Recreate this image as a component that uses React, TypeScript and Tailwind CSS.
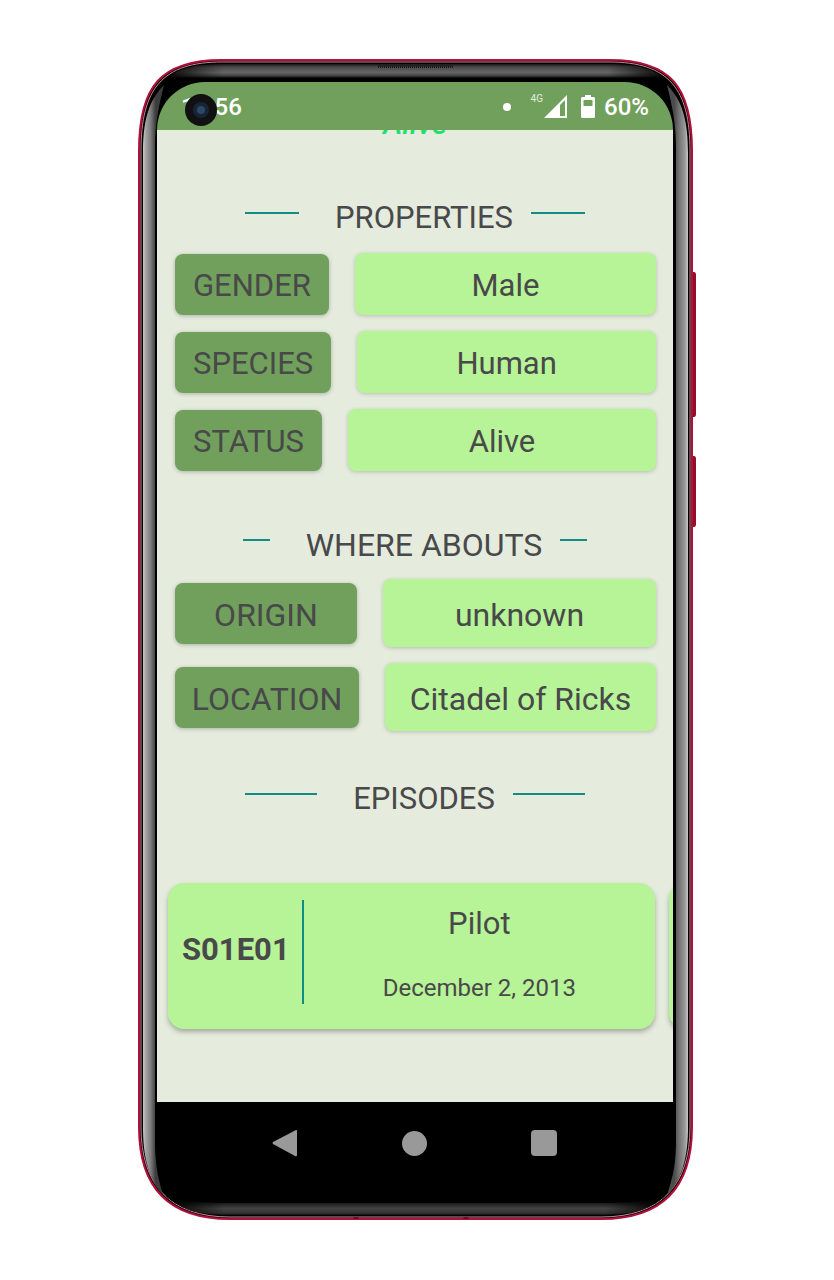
import type { ReactNode } from "react";

function PhoneFrame() {
  return (
    <svg className="absolute inset-0 h-full w-full" viewBox="0 0 558 1161" preserveAspectRatio="none" aria-hidden="true">
      <defs>
        <linearGradient id="left" x1="0" x2="1">
          <stop offset="0" stopColor="#c8c8c8" />
          <stop offset="0.15" stopColor="#a0a0a0" />
          <stop offset="0.35" stopColor="#808080" />
          <stop offset="0.6" stopColor="#3c3c3c" />
        </linearGradient>
        <linearGradient id="right" x1="0" x2="1">
          <stop offset="0.35" stopColor="#4c4c4c" />
          <stop offset="0.6" stopColor="#777" />
          <stop offset="0.85" stopColor="#999" />
          <stop offset="1" stopColor="#c8c8c8" />
        </linearGradient>
        <linearGradient id="top" x1="0" x2="0" y1="0" y2="1">
          <stop offset="0" stopColor="#1c1416" />
          <stop offset="0.15" stopColor="#4a4a4a" />
          <stop offset="0.4" stopColor="#666" />
          <stop offset="0.55" stopColor="#444" />
          <stop offset="0.68" stopColor="#000" />
        </linearGradient>
        <linearGradient id="bottom" x1="0" x2="0" y1="0" y2="1">
          <stop offset="0.2" stopColor="#000" />
          <stop offset="0.65" stopColor="#444" />
          <stop offset="0.9" stopColor="#333" />
          <stop offset="1" stopColor="#111" />
        </linearGradient>
        <linearGradient id="fade" x1="0" x2="1">
          <stop offset="0" stopColor="#000" />
          <stop offset="0.12" stopColor="#000" stopOpacity="0" />
          <stop offset="0.88" stopColor="#000" stopOpacity="0" />
          <stop offset="1" stopColor="#000" />
        </linearGradient>
      </defs>
      <path d="M553 213H556Q558 213 558 216V355Q558 358 556 358H553Z" fill="#960d2b" />
      <path d="M553 397H556Q558 397 558 400V465Q558 468 556 468H553Z" fill="#960d2b" />
      <path d="M84 1H471C533 1 554 28 554 92V1068C554 1128 525 1160 463 1160H92C30 1160 1 1128 1 1068V92C1 28 22 1 84 1Z" fill="#000" stroke="#b0103a" strokeWidth="2" />
      <path d="M84 3H471C531 3 552 30 552 92V1068C552 1126 523 1158 463 1158H92C32 1158 3 1126 3 1068V92C3 30 24 3 84 3Z" fill="none" stroke="#c8879a" strokeWidth="1" />
      <path d="M24 26C36 11 52 5 84 5H471C503 5 519 11 531 26C518 22 500 22 471 22H84C55 22 37 22 24 26Z" fill="url(#top)" />
      <path d="M24 26C36 11 52 5 84 5H471C503 5 519 11 531 26C518 22 500 22 471 22H84C55 22 37 22 24 26Z" fill="url(#fade)" />
      <path d="M28 1137C46 1142 60 1144 92 1144H463C495 1144 509 1142 527 1137C510 1152 493 1156 463 1156H92C62 1156 45 1152 28 1137Z" fill="url(#bottom)" />
      <path d="M28 1137C46 1142 60 1144 92 1144H463C495 1144 509 1142 527 1137C510 1152 493 1156 463 1156H92C62 1156 45 1152 28 1137Z" fill="url(#fade)" />
      <path d="M26 26C10 42 5 63 5 94V1068C5 1096 10 1120 25 1136C20 1118 17 1106 17 1080V90C17 63 21 46 26 26Z" fill="url(#left)" />
      <path d="M529 26C545 42 550 63 550 94V1068C550 1096 545 1120 529 1136C535 1118 538 1106 538 1080V90C538 63 534 46 529 26Z" fill="url(#right)" />
      <path d="M240 7.500H315" stroke="#171717" strokeWidth="3" strokeDasharray="1 1" />
      <path d="M240 6.500H315" stroke="#222" strokeWidth="2" />
      <path d="M218 1158V1160M328 1158V1160" stroke="#6d0b24" strokeWidth="5" />
    </svg>
  );
}

function StatusBar() {
  return (
    <header className="relative z-10 flex h-12 items-center justify-between rounded-t-[48px] bg-[#70a05b] pt-[2px] pr-6 pl-6 text-2xl font-medium text-white">
      <time>12:56</time>
      <span className="absolute top-3 left-7 flex h-8 w-8 items-center justify-center rounded-full bg-[#111]" aria-hidden="true">
        <span className="flex h-4 w-4 items-center justify-center rounded-full bg-[#172534]">
          <span className="h-2 w-2 rounded-full bg-[#2d4867]" />
        </span>
      </span>
      <div className="flex items-center">
        <span className="mr-5 h-2 w-2 rounded-full bg-white" />
        <span className="h-7 text-[10px] leading-3 font-normal text-[#e5ecde]">4G</span>
        <svg className="mr-3 ml-px h-6 w-6" viewBox="0 0 24 24" aria-label="Signal">
          <path d="M23 0V23H0Z" fill="white" />
          <path d="M16 10L21 5V21H16Z" fill="#70a05b" />
        </svg>
        <svg className="mr-2 h-6 w-4" viewBox="0 0 16 24" aria-label="Battery">
          <path d="M5 0H11V2H13.500Q15 2 15 3.500V21.500Q15 23 13.500 23H2.500Q1 23 1 21.500V3.500Q1 2 2.500 2H5Z" fill="white" />
          <path d="M3.500 5H12.500V11H3.500Z" fill="#70a05b" />
        </svg>
        <span>60%</span>
      </div>
    </header>
  );
}

function Heading({ children, rule, spacing }: { children: ReactNode; rule: string; spacing: string }) {
  return (
    <div className={`flex h-10 items-start justify-center ${spacing}`}>
      <span className={`mt-[14px] h-[2px] bg-[#128c86] ${rule}`} />
      <h2 className="mr-[18px] ml-9 leading-10 whitespace-nowrap">{children}</h2>
      <span className={`mt-[14px] h-[2px] bg-[#128c86] ${rule}`} />
    </div>
  );
}

function Property({ name, value, tall = false, width = "px-[18px]" }: { name: string; value: string; tall?: boolean; width?: string }) {
  return (
    <div className="flex items-center gap-[26px]">
      <dt className={`flex h-[61px] shrink-0 items-center justify-center rounded-lg bg-[#70a05b] pt-1 shadow-[0_1px_4px_rgba(0,0,0,0.25)] ${width}`}>{name}</dt>
      <dd className={`flex min-w-0 flex-1 items-center justify-center rounded-lg bg-[#b7f397] pt-1 shadow-[0_1px_4px_rgba(0,0,0,0.2)] ${tall ? "h-[68px]" : "h-[62px]"}`}>{value}</dd>
    </div>
  );
}

export default function App() {
  return (
    <main className="flex min-h-screen items-start justify-center bg-white pt-[59px] font-['Roboto',sans-serif] text-[#49484a]">
      <div className="relative w-full max-w-[558px] pt-[23px] pr-[23px] pb-8 pl-[19px]">
        <PhoneFrame />
        <div className="relative">
          <StatusBar />
          <div className="overflow-hidden bg-[#e5ecde] pb-[73px]">
            <p className="-mt-6 text-center text-[30px] leading-9 font-medium text-[#1fe06d] italic">Alive</p>
            <section className="text-[31px]">
              <Heading rule="w-[54px]" spacing="mt-14">PROPERTIES</Heading>
              <dl className="mt-[15px] flex flex-col gap-4 pr-[17px] pl-[18px]">
                <Property name="GENDER" value="Male" />
                <Property name="SPECIES" value="Human" />
                <Property name="STATUS" value="Alive" />
              </dl>
            </section>
            <section className="text-[32px]">
              <Heading rule="w-[27px]" spacing="mt-[54px]">WHERE ABOUTS</Heading>
              <dl className="mt-[14px] flex flex-col gap-4 pr-[17px] pl-[18px]">
                <Property name="ORIGIN" value="unknown" tall width="w-[182px]" />
                <Property name="LOCATION" value="Citadel of Ricks" tall width="w-[184px]" />
              </dl>
            </section>
            <section className="text-[31px]">
              <Heading rule="w-[72px]" spacing="mt-12">EPISODES</Heading>
              <div className="mt-16 flex gap-[14px] pl-[11px]">
                <article className="flex h-[146px] w-[487px] shrink-0 items-center rounded-2xl bg-[#b7f397] pl-[14px] shadow-[0_3px_5px_rgba(0,0,0,0.28)]">
                  <strong className="-mt-3 font-bold">S01E01</strong>
                  <span className="-mt-2 ml-3 h-[104px] w-[2px] bg-[#128c86]" />
                  <div className="flex flex-1 flex-col items-center gap-6">
                    <h3 className="leading-10">Pilot</h3>
                    <p className="text-2xl leading-10">December 2, 2013</p>
                  </div>
                </article>
                <article className="h-[146px] w-[487px] shrink-0 rounded-2xl bg-[#b7f397] shadow-[0_3px_5px_rgba(0,0,0,0.28)]" aria-label="Next episode" />
              </div>
            </section>
          </div>
          <nav className="flex h-[86px] items-center justify-center gap-[104px] pr-px pb-1" aria-label="System navigation">
            <button type="button" aria-label="Back">
              <svg className="h-7 w-[26px]" viewBox="0 0 26 28"><path d="M24 1Q25 .5 25 2V26Q25 28 23 27L1 15Q0 14 1 13Z" fill="#999" /></svg>
            </button>
            <button type="button" aria-label="Home" className="h-[25px] w-[25px] rounded-full bg-[#999]" />
            <button type="button" aria-label="Recent apps" className="h-[26px] w-[26px] rounded-sm bg-[#999]" />
          </nav>
        </div>
      </div>
    </main>
  );
}
